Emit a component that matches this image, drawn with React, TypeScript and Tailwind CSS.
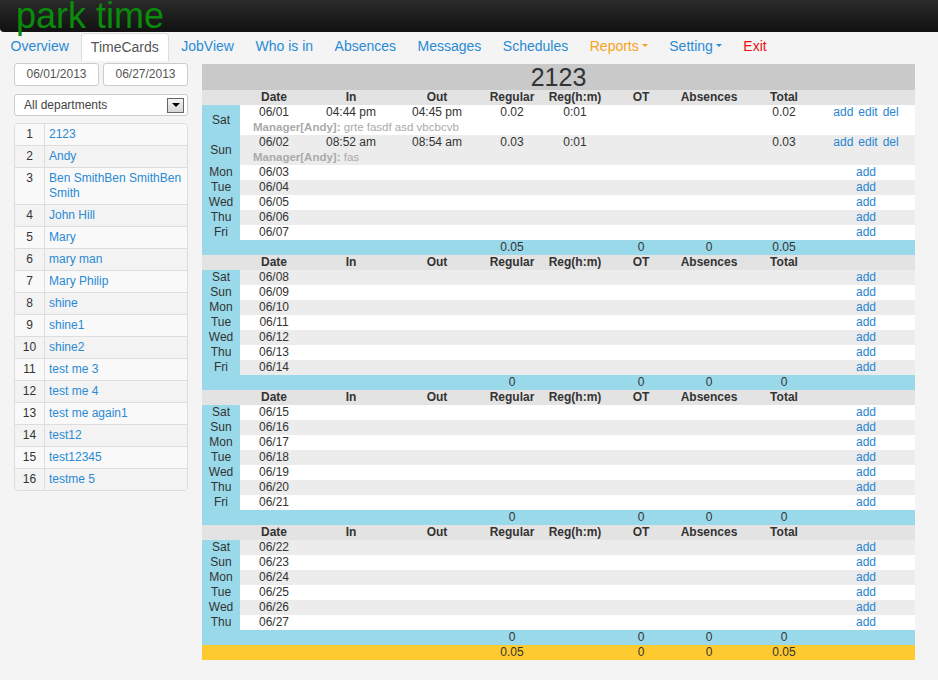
import React from "react";

type Day = {
  d: string;
  date: string;
  tin?: string;
  tout?: string;
  reg?: string;
  hm?: string;
  total?: string;
  note?: string;
};

type Week = { days: Day[]; sum: string[] };

const mk = (pairs: string[][]): Day[] => pairs.map(([d, date]) => ({ d, date }));

const weeks: Week[] = [
  {
    days: [
      { d: "Sat", date: "06/01", tin: "04:44 pm", tout: "04:45 pm", reg: "0.02", hm: "0:01", total: "0.02", note: "grte fasdf asd vbcbcvb" },
      { d: "Sun", date: "06/02", tin: "08:52 am", tout: "08:54 am", reg: "0.03", hm: "0:01", total: "0.03", note: "fas" },
      ...mk([["Mon", "06/03"], ["Tue", "06/04"], ["Wed", "06/05"], ["Thu", "06/06"], ["Fri", "06/07"]]),
    ],
    sum: ["0.05", "0", "0", "0.05"],
  },
  {
    days: mk([["Sat", "06/08"], ["Sun", "06/09"], ["Mon", "06/10"], ["Tue", "06/11"], ["Wed", "06/12"], ["Thu", "06/13"], ["Fri", "06/14"]]),
    sum: ["0", "0", "0", "0"],
  },
  {
    days: mk([["Sat", "06/15"], ["Sun", "06/16"], ["Mon", "06/17"], ["Tue", "06/18"], ["Wed", "06/19"], ["Thu", "06/20"], ["Fri", "06/21"]]),
    sum: ["0", "0", "0", "0"],
  },
  {
    days: mk([["Sat", "06/22"], ["Sun", "06/23"], ["Mon", "06/24"], ["Tue", "06/25"], ["Wed", "06/26"], ["Thu", "06/27"]]),
    sum: ["0", "0", "0", "0"],
  },
];

const people = [
  "2123", "Andy", "Ben SmithBen SmithBen Smith", "John Hill", "Mary", "mary man", "Mary Philip",
  "shine", "shine1", "shine2", "test me 3", "test me 4", "test me again1", "test12", "test12345", "testme 5",
];

const nav = [
  { name: "Overview", color: "text-[#2a8ad4]" },
  { name: "TimeCards", active: true },
  { name: "JobView", color: "text-[#2a8ad4]" },
  { name: "Who is in", color: "text-[#2a8ad4]" },
  { name: "Absences", color: "text-[#2a8ad4]" },
  { name: "Messages", color: "text-[#2a8ad4]" },
  { name: "Schedules", color: "text-[#2a8ad4]" },
  { name: "Reports", color: "text-[#f7a21b]", caret: true },
  { name: "Setting", color: "text-[#2a8ad4]", caret: true },
  { name: "Exit", color: "text-[#ee1111]" },
];

const widths = [38, 68, 86, 86, 64, 62, 70, 66, 84, 89];
const heads = ["", "Date", "In", "Out", "Regular", "Reg(h:m)", "OT", "Absences", "Total", ""];

function Caret() {
  return <span className="inline-block w-0 h-0 ml-[3px] mb-[3px] align-middle border-x-[3px] border-x-transparent border-t-[3px] border-t-current" />;
}

function SumRow({ vals, bg }: { vals: string[]; bg: string }) {
  return (
    <tr className={bg}>
      <td colSpan={4} />
      <td className="text-center">{vals[0]}</td>
      <td />
      <td className="text-center">{vals[1]}</td>
      <td className="text-center">{vals[2]}</td>
      <td className="text-center">{vals[3]}</td>
      <td />
    </tr>
  );
}

export default function App() {
  let stripe = 0;
  return (
    <div className="min-h-[680px] bg-[#f4f4f4] text-[#333] font-['Liberation_Sans',Arial,sans-serif]">
      {/* top bar */}
      <div className="h-[32px] bg-gradient-to-b from-[#2b2b2b] to-[#111] rounded-bl-[4px]">
        <div className="pl-[16px] text-[36px] leading-[32px] text-[#0b8b0b] whitespace-nowrap">park time</div>
      </div>

      {/* nav */}
      <div className="flex h-[29px] items-end">
        {nav.map((n) =>
          n.active ? (
            <div key={n.name} className="h-[28px] ml-[1px] mr-[2px] px-[9px] bg-white border border-[#ddd] border-b-0 rounded-t-[4px] text-[14px] leading-[26px] text-[#555]">
              {n.name}
            </div>
          ) : (
            <div key={n.name} className={`h-[28px] mr-[0.5px] px-[10.5px] text-[14px] leading-[26px] whitespace-nowrap ${n.color}`}>
              {n.name}
              {n.caret && <Caret />}
            </div>
          )
        )}
      </div>

      <div className="flex">
        {/* sidebar */}
        <div className="ml-[14px] w-[174px] mt-[2px] text-[12px]">
          <div className="flex gap-[4px]">
            <div className="w-[85px] h-[23px] bg-white border border-[#ccc] rounded-[3px] text-center leading-[21px] text-[#555]">06/01/2013</div>
            <div className="w-[85px] h-[23px] bg-white border border-[#ccc] rounded-[3px] text-center leading-[21px] text-[#555]">06/27/2013</div>
          </div>
          <div className="mt-[8px] h-[22px] bg-white border border-[#ccc] rounded-[3px] flex items-center justify-between pl-[9px] pr-[3px] text-[#444]">
            <span>All departments</span>
            <span className="w-[17px] h-[15px] border border-[#666] bg-gradient-to-b from-[#f2f2f2] to-[#d6d6d6] flex items-center justify-center">
              <span className="w-0 h-0 border-x-[4px] border-x-transparent border-t-[4px] border-t-black" />
            </span>
          </div>
          <div className="mt-[7px] border border-[#ddd] rounded-[4px] overflow-hidden">
            {people.map((p, i) => (
              <div key={p} className={`flex leading-[15px] ${i > 0 ? "border-t border-[#ddd]" : ""} ${i % 2 === 0 ? "bg-[#f9f9f9]" : "bg-[#f3f3f3]"}`}>
                <div className="w-[30px] shrink-0 text-center py-[3px] border-r border-[#ddd]">{i + 1}</div>
                <div className="pl-[4px] pr-[2px] py-[3px] text-[#2a8ad4]">{p}</div>
              </div>
            ))}
          </div>
        </div>

        {/* timecard table */}
        <div className="ml-[14px] mt-[3px]">
          <table className="table-fixed border-collapse w-[713px] text-[12px] leading-[15px]">
            <colgroup>
              {widths.map((w, i) => (
                <col key={i} style={{ width: w }} />
              ))}
            </colgroup>
            <tbody>
              <tr className="bg-[#c9c9c9]">
                <td colSpan={10} className="h-[26px] text-center text-[25px] leading-[26px] text-[#333]">2123</td>
              </tr>
              {weeks.map((w, wi) => (
                <React.Fragment key={wi}>
                  <tr className="bg-[#e3e3e3] font-bold">
                    {heads.map((h, i) => (
                      <td key={i} className="text-center h-[15px]">{h}</td>
                    ))}
                  </tr>
                  {w.days.map((d) => {
                    const bg = stripe++ % 2 === 0 ? "bg-white" : "bg-[#ececec]";
                    return (
                      <React.Fragment key={d.date}>
                        <tr className={bg}>
                          <td rowSpan={d.note ? 2 : 1} className="bg-[#99d9ea] text-center align-middle">{d.d}</td>
                          <td className="text-center h-[15px]">{d.date}</td>
                          <td className="text-center">{d.tin}</td>
                          <td className="text-center">{d.tout}</td>
                          <td className="text-center">{d.reg}</td>
                          <td className="text-center">{d.hm}</td>
                          <td />
                          <td />
                          <td className="text-center">{d.total}</td>
                          <td className="text-center pr-[9px] text-[#2a84d0] whitespace-nowrap">
                            {d.tin ? (
                              <span className="inline-flex gap-[5px]">
                                <span>add</span>
                                <span>edit</span>
                                <span>del</span>
                              </span>
                            ) : (
                              "add"
                            )}
                          </td>
                        </tr>
                        {d.note && (
                          <tr className={bg}>
                            <td colSpan={9} className="h-[15px] pl-[13px] text-[11.5px] text-[#aaa] whitespace-nowrap">
                              <span className="font-bold">Manager[Andy]:</span> {d.note}
                            </td>
                          </tr>
                        )}
                      </React.Fragment>
                    );
                  })}
                  <SumRow vals={w.sum} bg="bg-[#99d9ea]" />
                </React.Fragment>
              ))}
              <SumRow vals={["0.05", "0", "0", "0.05"]} bg="bg-[#fdca2f]" />
            </tbody>
          </table>
        </div>
      </div>
    </div>
  );
}
